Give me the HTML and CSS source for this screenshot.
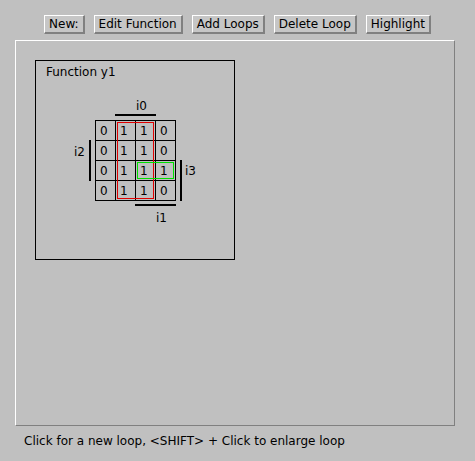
FILE: index.html
```html
<!DOCTYPE html>
<html>
<head>
<meta charset="utf-8">
<link rel="stylesheet" href="styles.css">
</head>
<body>
<div class="toolbar">
  <button class="btn">New:</button>
  <button class="btn">Edit Function</button>
  <button class="btn">Add Loops</button>
  <button class="btn">Delete Loop</button>
  <button class="btn">Highlight</button>
</div>
<div class="panel">
  <div class="fbox">
    <div class="ftitle">Function y1</div>
    <div class="kmap">
      <div class="grid">
        <div class="cell">0</div><div class="cell">1</div><div class="cell">1</div><div class="cell">0</div>
        <div class="cell">0</div><div class="cell">1</div><div class="cell">1</div><div class="cell">0</div>
        <div class="cell">0</div><div class="cell">1</div><div class="cell">1</div><div class="cell">1</div>
        <div class="cell">0</div><div class="cell">1</div><div class="cell">1</div><div class="cell">0</div>
      </div>
      <div class="bar bar-i0"></div>
      <div class="bar bar-i1"></div>
      <div class="bar bar-i2"></div>
      <div class="bar bar-i3"></div>
      <div class="lbl lbl-i0">i0</div>
      <div class="lbl lbl-i1">i1</div>
      <div class="lbl lbl-i2">i2</div>
      <div class="lbl lbl-i3">i3</div>
      <div class="loop loop-red"></div>
      <div class="loop loop-green"></div>
    </div>
  </div>
</div>
<div class="status">Click for a new loop, &lt;SHIFT&gt; + Click to enlarge loop</div>
</body>
</html>
```
FILE: styles.css
```css
html, body {
  margin: 0;
  padding: 0;
  background: #c0c0c0;
  font-family: "DejaVu Sans", sans-serif;
  font-size: 12px;
  color: #000;
}

.toolbar {
  display: flex;
  justify-content: center;
  gap: 9px;
  padding-top: 15px;
}

.btn {
  height: 19px;
  box-sizing: border-box;
  border-style: solid;
  border-width: 1px 2px 2px 1px;
  border-color: #ffffff #808080 #808080 #ffffff;
  background: #c6c6c6;
  font: inherit;
  color: #000;
  padding: 0 4px 0 4px;
  line-height: 16px;
  margin: 0;
}

.panel {
  margin: 6px 0 0 15px;
  width: 440px;
  height: 386px;
  box-sizing: border-box;
  border-style: solid;
  border-width: 1px;
  border-color: #ffffff #808080 #808080 #ffffff;
  padding: 19px 0 0 19px;
}

.fbox {
  width: 200px;
  height: 200px;
  box-sizing: border-box;
  border: 1px solid #000;
  padding: 4px 0 0 10px;
}

.ftitle {
  line-height: 14px;
}

.kmap {
  position: relative;
  width: 81px;
  margin: 41px 0 0 49px;
}

.grid {
  display: grid;
  grid-template-columns: repeat(4, 19px);
  grid-auto-rows: 19px;
  gap: 1px;
  padding: 1px;
  background: #000;
  width: max-content;
}

.cell {
  background: #c0c0c0;
  box-sizing: border-box;
  padding: 2px 0 0 4px;
  line-height: 17px;
  overflow: hidden;
}

.bar {
  position: absolute;
  background: #000;
}
.bar-i0 { left: 20px; top: -6px; width: 41px; height: 2px; }
.bar-i1 { left: 40px; top: 84px; width: 41px; height: 2px; }
.bar-i2 { left: -6px; top: 20px; width: 2px; height: 41px; }
.bar-i3 { left: 85px; top: 40px; width: 2px; height: 41px; }

.lbl {
  position: absolute;
  line-height: 14px;
}
.lbl-i0 { left: 41px; top: -21px; }
.lbl-i1 { left: 61px; top: 91px; }
.lbl-i2 { left: -21px; top: 25px; }
.lbl-i3 { left: 90px; top: 44px; }

.loop {
  position: absolute;
  box-sizing: border-box;
  border: 1px solid;
}
.loop-red { left: 22px; top: 2px; width: 37px; height: 77px; border-color: #e00000; }
.loop-green { left: 42px; top: 42px; width: 37px; height: 17px; border-color: #00e000; }

.status {
  padding: 8px 0 0 24px;
  line-height: 14px;
}
```
